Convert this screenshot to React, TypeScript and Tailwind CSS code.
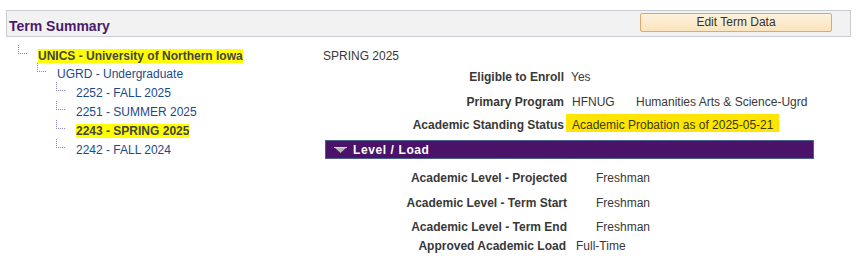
import React from "react";

function Conn() {
  return (
    <svg width="20" height="9" className="shrink-0 -mt-[4px]" viewBox="0 0 20 9">
      <line x1="0.5" y1="0" x2="0.5" y2="8.5" stroke="#8585c8" strokeWidth="1" strokeDasharray="1 1" />
      <line x1="0" y1="8.5" x2="10" y2="8.5" stroke="#8585c8" strokeWidth="1" strokeDasharray="1 1" />
    </svg>
  );
}

function TreeRow({ indent, h, children }: { indent: string; h: string; children: React.ReactNode }) {
  return (
    <div className={`flex items-start ${indent} ${h}`}>
      <Conn />
      {children}
    </div>
  );
}

export default function App() {
  return (
    <div className="w-[856px] h-[256px] bg-white overflow-hidden font-['Liberation_Sans',Arial,sans-serif] text-[12px] leading-[14px] text-[#383838]">
      <div className="mt-[10px] ml-[6px] w-[845px] h-[27px] border border-[#cbcbd3] bg-[#f2f2f2] flex items-start justify-between">
        <div className="pl-[2px] pt-[7px] text-[14px] leading-[16px] font-bold text-[#4a1a6b]">Term Summary</div>
        <button className="mt-[2px] mr-[18px] w-[192px] h-[19px] border border-[#e0a86c] rounded-[2px] bg-gradient-to-b from-[#fdf1dc] to-[#fbe4bd] text-[12px] leading-[17px] text-[#333] text-center">
          Edit Term Data
        </button>
      </div>
      <div className="flex">
        <div className="w-[323px] shrink-0 pt-[12px]">
          <TreeRow indent="pl-[18px]" h="h-[18px]">
            <span className="bg-[#ffff00] font-bold text-[#444]">UNICS - University of Northern Iowa</span>
          </TreeRow>
          <TreeRow indent="pl-[37px]" h="h-[19px]">
            <span className="text-[#1b4a8c]">UGRD - Undergraduate</span>
          </TreeRow>
          <TreeRow indent="pl-[56px]" h="h-[19px]">
            <span className="text-[#1b4a8c]">2252 - FALL 2025</span>
          </TreeRow>
          <TreeRow indent="pl-[56px]" h="h-[19px]">
            <span className="text-[#1b4a8c]">2251 - SUMMER 2025</span>
          </TreeRow>
          <TreeRow indent="pl-[56px]" h="h-[19px]">
            <span className="bg-[#ffff00] font-bold text-[#444]">2243 - SPRING 2025</span>
          </TreeRow>
          <TreeRow indent="pl-[56px]" h="h-[19px]">
            <span className="text-[#1b4a8c]">2242 - FALL 2024</span>
          </TreeRow>
        </div>
        <div className="flex-1 pt-[12px]">
          <div className="h-[21px]">SPRING 2025</div>
          <div className="flex h-[25px]">
            <div className="w-[241px] text-right font-bold">Eligible to Enroll</div>
            <div className="pl-[7px]">Yes</div>
          </div>
          <div className="flex h-[19px]">
            <div className="w-[241px] text-right font-bold">Primary Program</div>
            <div className="pl-[8px] w-[72px]">HFNUG</div>
            <div>Humanities Arts &amp; Science-Ugrd</div>
          </div>
          <div className="flex h-[18px]">
            <div className="w-[241px] text-right font-bold pt-[4px]">Academic Standing Status</div>
            <div className="ml-[2px] h-[18px] pt-[4px] px-[6px] bg-[#ffe500] text-[#3a3a10]">Academic Probation as of 2025-05-21</div>
          </div>
          <div className="mt-[8px] ml-[2px] w-[489px] h-[19px] bg-[#4a1268] border border-[#4c5f90] flex items-center">
            <svg width="13" height="6" viewBox="0 0 13 6" className="ml-[8px]">
              <polygon points="0,0 13,0 6.5,6" fill="#b4b4b4" />
              <line x1="0" y1="0.5" x2="13" y2="0.5" stroke="#d8d8d8" strokeWidth="1" />
            </svg>
            <span className="ml-[6px] text-white font-bold text-[12px] tracking-[0.05em]">Level / Load</span>
          </div>
          <div className="pt-[12px]">
            <div className="flex h-[25px]">
              <div className="w-[244px] text-right font-bold">Academic Level - Projected</div>
              <div className="pl-[29px]">Freshman</div>
            </div>
            <div className="flex h-[24px]">
              <div className="w-[244px] text-right font-bold">Academic Level - Term Start</div>
              <div className="pl-[29px]">Freshman</div>
            </div>
            <div className="flex h-[19px]">
              <div className="w-[244px] text-right font-bold">Academic Level - Term End</div>
              <div className="pl-[29px]">Freshman</div>
            </div>
            <div className="flex h-[19px]">
              <div className="w-[243px] text-right font-bold">Approved Academic Load</div>
              <div className="pl-[10px]">Full-Time</div>
            </div>
          </div>
        </div>
      </div>
    </div>
  );
}
